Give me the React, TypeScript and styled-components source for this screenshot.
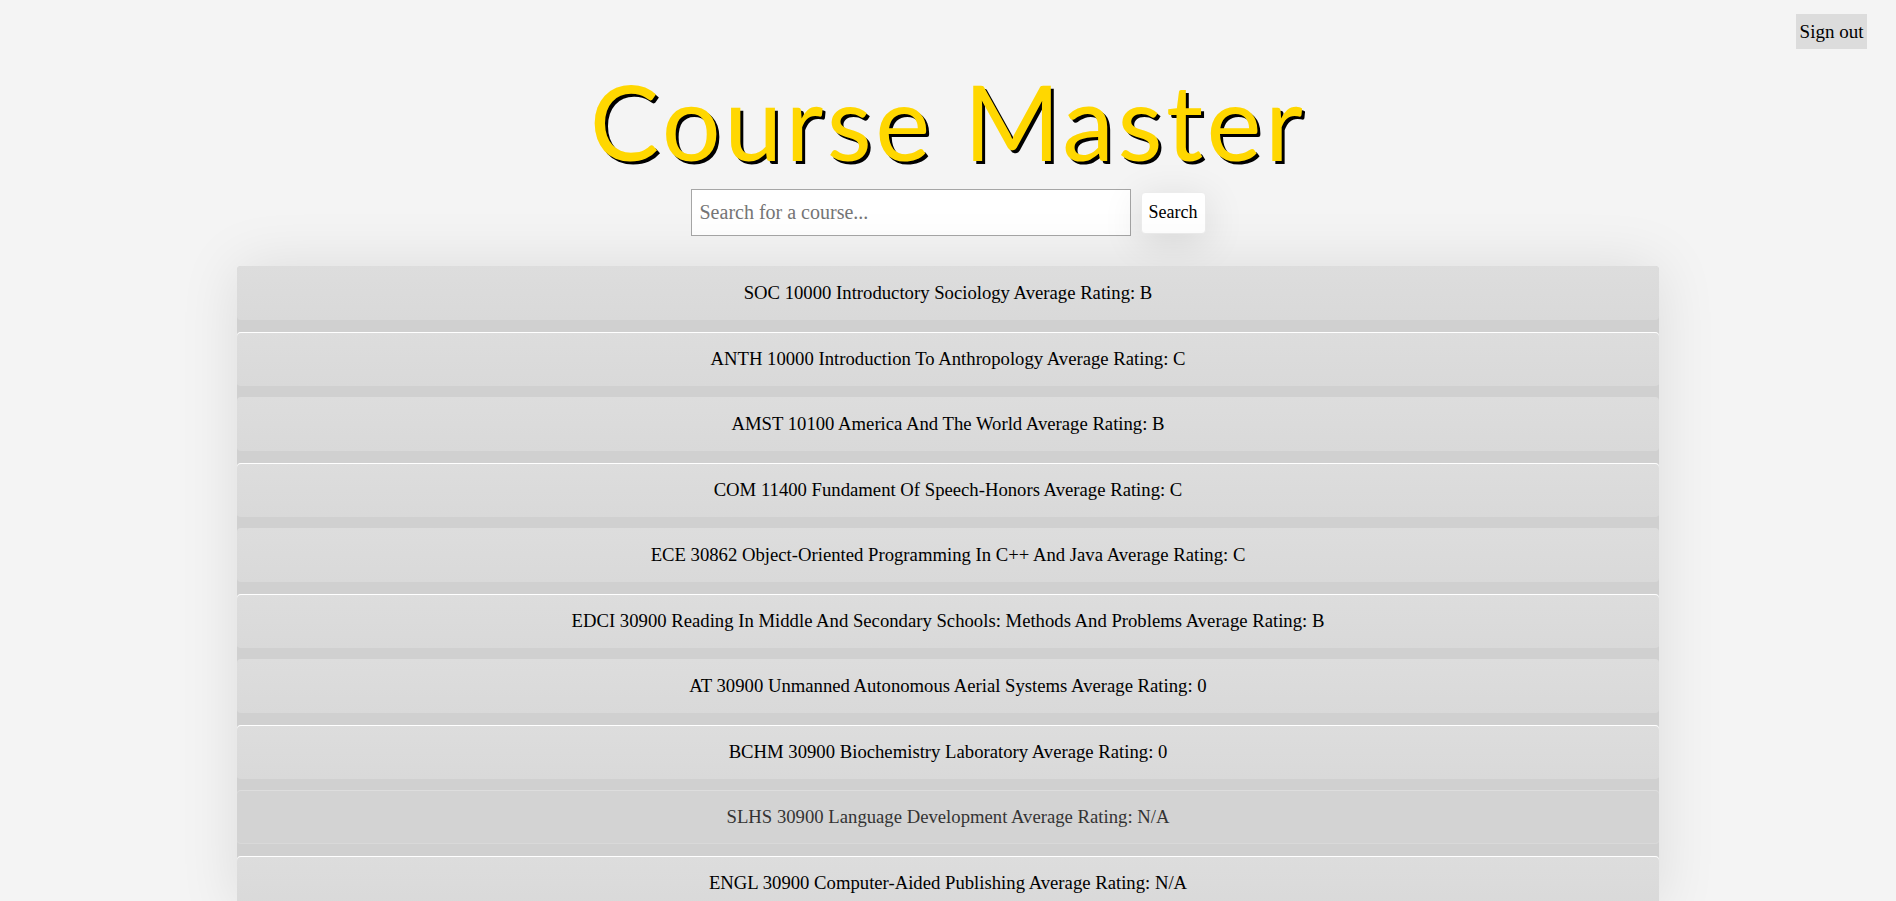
import styled, { createGlobalStyle } from "styled-components";

const enum Colors {
    PageBackground = "#f4f4f4",
    TitleColor = "#ffd700",
    RowBackground = "#dddddd",
    RowBackgroundBottom = "#d9d9d9",
    RowHoverBackground = "#d3d3d3",
    ListBackground = "#d0d0d0",
    SignOutBackground = "#dcdcdc",
}

const courses = [
    "SOC 10000 Introductory Sociology Average Rating: B",
    "ANTH 10000 Introduction To Anthropology Average Rating: C",
    "AMST 10100 America And The World Average Rating: B",
    "COM 11400 Fundament Of Speech-Honors Average Rating: C",
    "ECE 30862 Object-Oriented Programming In C++ And Java Average Rating: C",
    "EDCI 30900 Reading In Middle And Secondary Schools: Methods And Problems Average Rating: B",
    "AT 30900 Unmanned Autonomous Aerial Systems Average Rating: 0",
    "BCHM 30900 Biochemistry Laboratory Average Rating: 0",
    "SLHS 30900 Language Development Average Rating: N/A",
    "ENGL 30900 Computer-Aided Publishing Average Rating: N/A",
];

const GlobalStyle = createGlobalStyle`
    body {
        margin: 0;
        background: ${Colors.PageBackground};
        font-family: "Liberation Serif", "Times New Roman", serif;
        overflow: hidden;
    }
`;

const App = () => {
    return (
        <>
            <GlobalStyle/>
            <Page>
                <TopBar>
                    <SignOutButton>Sign out</SignOutButton>
                </TopBar>
                <Title>Course Master</Title>
                <SearchForm onSubmit={(e) => e.preventDefault()}>
                    <SearchInput placeholder="Search for a course..."/>
                    <SearchButton type="submit">Search</SearchButton>
                </SearchForm>
                <CourseList>
                    {courses.map((c, i) => (
                        // 9번째 줄은 마우스가 올라가 있는 상태
                        <CourseRow key={c} $hovered={i === 8}>{c}</CourseRow>
                    ))}
                </CourseList>
            </Page>
        </>
    )
};

export default App;

const Page = styled.div`
    display: flex;
    flex-direction: column;
    align-items: center;
    min-height: 100vh;
`;

const TopBar = styled.div`
    align-self: stretch;
    display: flex;
    justify-content: flex-end;
    padding: 14px 29px 0 0;
`;

const SignOutButton = styled.button`
    background: ${Colors.SignOutBackground};
    border: none;
    font-family: "Liberation Serif", serif;
    font-size: 19px;
    color: #000;
    width: 71px;
    height: 35px;
    padding: 0;

    &:hover {
        cursor: pointer;
    }
`;

const Title = styled.h1`
    margin: 20px 0 0;
    font-family: Lato, "Open Sans", sans-serif;
    font-weight: 400;
    font-size: 104px;
    line-height: 104px;
    letter-spacing: 3.5px;
    color: ${Colors.TitleColor};
    text-shadow: 3px 3px 0 #000;
`;

const SearchForm = styled.form`
    display: flex;
    align-items: center;
    gap: 10px;
    margin-top: 16px;
`;

const SearchInput = styled.input`
    box-sizing: border-box;
    width: 440px;
    height: 47px;
    border: 1px solid #a6a6a6;
    background: #fff;
    padding: 0 8px;
    font-family: "Liberation Serif", serif;
    font-size: 20px;
    outline: none;

    &::placeholder {
        color: #757575;
    }
`;

const SearchButton = styled.button`
    box-sizing: border-box;
    width: 65px;
    height: 42px;
    background: #fff;
    border: 1px solid #ececec;
    border-radius: 4px;
    font-family: "Liberation Serif", serif;
    font-size: 18px;
    color: #000;
    padding: 0;
    box-shadow: 0 8px 40px rgba(0, 0, 0, 0.12);
`;

const CourseList = styled.ul`
    list-style: none;
    width: 75%;
    margin: 30px 0 0;
    padding: 0;
    display: flex;
    flex-direction: column;
    gap: 11.5px;
    background: ${Colors.ListBackground};
    border-radius: 4px;
    box-shadow: 0 0 60px rgba(0, 0, 0, 0.1);
`;

const CourseRow = styled.li<{ $hovered?: boolean }>`
    height: 54px;
    display: flex;
    align-items: center;
    justify-content: center;
    border-radius: 4px;
    font-size: 18.7px;
    color: ${(props) => (props.$hovered ? "#333" : "#000")};
    background: ${(props) => props.$hovered
            ? Colors.RowHoverBackground
            : `linear-gradient(${Colors.RowBackground}, ${Colors.RowBackgroundBottom})`};
    box-shadow: ${(props) => props.$hovered
            ? "inset 0 1px 0 #dddddd, inset 0 -1px 0 #d9d9d9"
            : "none"};

    &:nth-child(even) {
        box-shadow: inset 0 1px 0 #fff;
    }

    &:hover {
        cursor: pointer;
        background: ${Colors.RowHoverBackground};
        color: #333;
    }
`;
